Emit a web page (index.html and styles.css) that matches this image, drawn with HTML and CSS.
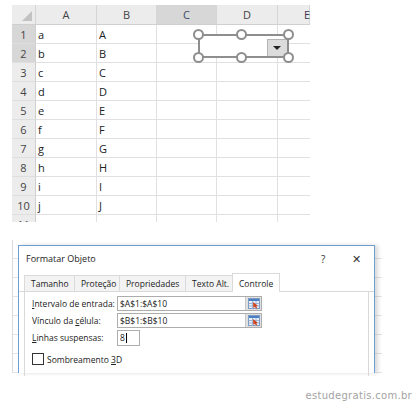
FILE: index.html
```html
<!DOCTYPE html>
<html lang="pt-BR">
<head>
    <meta charset="UTF-8">
    <title>Formatar Objeto - Caixa de combinação</title>
    <link rel="stylesheet" href="styles.css">
</head>
<body>
    <!-- planilha -->
    <div class="sheet">
        <div class="row head">
            <span class="corner"></span><span>A</span><span>B</span><span class="sel">C</span><span>D</span><span class="e">E</span>
        </div>
        <div class="row"><span class="num sel">1</span><span>a</span><span>A</span><span></span><span></span><span></span></div>
        <div class="row"><span class="num sel">2</span><span>b</span><span>B</span><span></span><span></span><span></span></div>
        <div class="row"><span class="num">3</span><span>c</span><span>C</span><span></span><span></span><span></span></div>
        <div class="row"><span class="num">4</span><span>d</span><span>D</span><span></span><span></span><span></span></div>
        <div class="row"><span class="num">5</span><span>e</span><span>E</span><span></span><span></span><span></span></div>
        <div class="row"><span class="num">6</span><span>f</span><span>F</span><span></span><span></span><span></span></div>
        <div class="row"><span class="num">7</span><span>g</span><span>G</span><span></span><span></span><span></span></div>
        <div class="row"><span class="num">8</span><span>h</span><span>H</span><span></span><span></span><span></span></div>
        <div class="row"><span class="num">9</span><span>i</span><span>I</span><span></span><span></span><span></span></div>
        <div class="row"><span class="num">10</span><span>j</span><span>J</span><span></span><span></span><span></span></div>
        <div class="row"><span class="num">11</span><span></span><span></span><span></span><span></span><span></span></div>

        <!-- caixa de combinação selecionada -->
        <div class="combo">
            <div class="drop"><i></i></div>
            <b class="h tl"></b><b class="h tm"></b><b class="h tr"></b>
            <b class="h bl"></b><b class="h bm"></b><b class="h br"></b>
        </div>
    </div>

    <!-- janela Formatar Objeto -->
    <div class="backdrop">
        <div class="dialog">
            <div class="titlebar">
                <span class="title">Formatar Objeto</span>
                <span class="help">?</span>
                <span class="close">✕</span>
            </div>
            <div class="tabs">
                <span class="tab t1">Tamanho</span>
                <span class="tab t2">Proteção</span>
                <span class="tab t3">Propriedades</span>
                <span class="tab t4">Texto Alt.</span>
                <span class="tab active">Controle</span>
            </div>
            <div class="panel">
                <div class="field">
                    <label><u>I</u>ntervalo de entrada:</label>
                    <div class="input wide"><span>$A$1:$A$10</span>
                        <div class="pick"><svg width="12" height="11" viewBox="0 0 12 11"><rect x="0.5" y="0.5" width="11" height="10" fill="#e8f0fa" stroke="#7d9cc4"/><rect x="1" y="1" width="10" height="2" fill="#4d7fc4"/><path d="M1 5.5h10M1 8h10M4.5 3v8M8 3v8" stroke="#9db4d6"/><path d="M5 4l5 4-2 .3 1.2 2-1 .5-1.2-2-1.6 1.2z" fill="#d2431c"/></svg></div>
                    </div>
                </div>
                <div class="field">
                    <label>Vínculo da <u>c</u>élula:</label>
                    <div class="input wide"><span>$B$1:$B$10</span>
                        <div class="pick"><svg width="12" height="11" viewBox="0 0 12 11"><rect x="0.5" y="0.5" width="11" height="10" fill="#e8f0fa" stroke="#7d9cc4"/><rect x="1" y="1" width="10" height="2" fill="#4d7fc4"/><path d="M1 5.5h10M1 8h10M4.5 3v8M8 3v8" stroke="#9db4d6"/><path d="M5 4l5 4-2 .3 1.2 2-1 .5-1.2-2-1.6 1.2z" fill="#d2431c"/></svg></div>
                    </div>
                </div>
                <div class="field">
                    <label><u>L</u>inhas suspensas:</label>
                    <div class="input small"><span>8</span><i class="caret"></i></div>
                </div>
                <div class="check">
                    <span class="box"></span>
                    <span>Sombreamento <u>3</u>D</span>
                </div>
            </div>
        </div>
    </div>

    <div class="credit">estudegratis.com.br</div>
</body>
</html>
```

FILE: styles.css
```css
body {
    margin: 0;
    background: #fff;
    font-family: "Open Sans", "Noto Sans", sans-serif;
}

/* planilha */
.sheet {
    position: relative;
    margin: 5px 0 0 12px;
    width: 298px;
    height: 217px;
    overflow: hidden;
}
.row {
    display: flex;
    height: 19px;
}
.row span {
    box-sizing: border-box;
    flex: none;
    height: 19px;
    border-right: 1px solid #e2dfe2;
    border-bottom: 1px solid #e2dfe2;
    font-size: 11px;
    line-height: 19px;
    color: #222;
    padding-left: 2px;
}
.row span:nth-child(1) { width: 24px; }
.row span:nth-child(2) { width: 61px; }
.row span:nth-child(3) { width: 60px; }
.row span:nth-child(4) { width: 60px; }
.row span:nth-child(5) { width: 61px; }
.row span:nth-child(6) { width: 32px; border-right: none; }

.row.head { height: 20px; }
.row.head span {
    height: 20px;
    line-height: 20px;
    background: #ececec;
    border-right: 1px solid #d6d6d6;
    border-bottom: 1px solid #cfcfcf;
    text-align: center;
    padding: 0;
    color: #444;
}
.row.head span.sel { background: #d7d7d7; color: #3c4a6a; }
.row.head span.e { text-align: left; padding-left: 26px; color: #433650; }
.corner { position: relative; }
.corner::after {
    content: "";
    position: absolute;
    right: 3px;
    bottom: 3px;
    border-left: 10px solid transparent;
    border-bottom: 10px solid #c2c2c2;
}
.row span.num {
    background: #ececec;
    border-right: 1px solid #cfcfcf;
    border-bottom: 1px solid #dedede;
    text-align: center;
    padding: 0;
    color: #444;
}
.row span.num.sel { background: #d7d7d7; }

/* controle selecionado */
.combo {
    position: absolute;
    left: 186px;
    top: 29px;
    width: 91px;
    height: 24px;
    box-sizing: border-box;
    border: 2px solid #8e8e8e;
    background: #fff;
}
.drop {
    position: absolute;
    right: 0;
    bottom: 0;
    width: 19px;
    height: 16px;
    background: #dcdcdc;
    border-left: 1px solid #b4b4b4;
    border-top: 1px solid #b4b4b4;
}
.drop i {
    position: absolute;
    left: 5px;
    top: 6px;
    border-left: 4px solid transparent;
    border-right: 4px solid transparent;
    border-top: 4px solid #222;
}
.h {
    position: absolute;
    width: 7px;
    height: 7px;
    border: 2px solid #8e8e8e;
    border-radius: 50%;
    background: #fff;
}
.tl { left: -7px; top: -7px; }
.tm { left: 36px; top: -7px; }
.tr { right: -7px; top: -7px; }
.bl { left: -7px; bottom: -7px; }
.bm { left: 36px; bottom: -7px; }
.br { right: -7px; bottom: -7px; }

/* janela */
.backdrop {
    margin: 18px 0 0 12px;
    width: 370px;
    height: 133px;
    background: repeating-linear-gradient(to bottom, #fff 0, #fff 18px, #e4e4e4 18px, #e4e4e4 19px);
    border-left: 1px solid #dadada;
    box-sizing: border-box;
    padding: 5px 0 0 5px;
}
.dialog {
    width: 357px;
    height: 128px;
    box-sizing: border-box;
    border: 1px solid #6d9fd6;
    border-bottom: none;
    background: #fff;
    box-shadow: 3px 0 4px rgba(0,0,0,0.15);
    font-size: 8.5px;
    color: #222;
    white-space: nowrap;
}
.titlebar {
    display: flex;
    align-items: center;
    height: 25px;
    padding: 0 0 0 7px;
}
.title { flex: 1; font-size: 9px; }
.help { width: 31px; font-size: 10px; color: #333; }
.close { width: 22px; font-size: 11px; color: #333; }
.tabs {
    display: flex;
    align-items: flex-end;
    height: 20px;
    padding-left: 5px;
    border-bottom: 1px solid #d9d9d9;
}
.tab {
    box-sizing: border-box;
    height: 16px;
    line-height: 15px;
    padding-left: 6px;
    background: #f3f3f3;
    border: 1px solid #dadada;
    border-bottom: none;
    margin-right: -1px;
}
.t1 { width: 51px; }
.t2 { width: 46px; }
.t3 { width: 67px; }
.t4 { width: 48px; }
.tab.active {
    width: 48px;
    height: 19px;
    line-height: 19px;
    background: #fff;
    margin-bottom: -1px;
}
.panel {
    margin: 0 5px;
    padding: 4px 0 0 7px;
    height: 80px;
    border-left: 1px solid #d9d9d9;
    border-right: 1px solid #d9d9d9;
}
.field {
    display: flex;
    align-items: center;
    height: 15px;
    margin-bottom: 2px;
}
.field label { width: 85px; }
.input {
    display: flex;
    align-items: center;
    box-sizing: border-box;
    height: 15px;
    border: 1px solid #adadad;
    padding-left: 2px;
    position: relative;
}
.input.wide { width: 145px; }
.input.wide span { flex: 1; }
.input.small { width: 23px; height: 16px; }
.caret {
    width: 1px;
    height: 10px;
    background: #000;
    margin-left: 1px;
}
.pick {
    display: flex;
    align-items: center;
    justify-content: center;
    width: 15px;
    height: 13px;
    background: #e1e1e1;
    border-left: 1px solid #c8c8c8;
}
.check {
    display: flex;
    align-items: center;
    margin-top: 8px;
    gap: 3px;
}
.box {
    width: 10px;
    height: 10px;
    border: 1px solid #333;
    background: #fff;
}

.credit {
    margin-top: 17px;
    text-align: right;
    padding-right: 1px;
    font-family: "DejaVu Sans", sans-serif;
    font-size: 10px;
    letter-spacing: 0.3px;
    color: #a3a3a3;
}
```
